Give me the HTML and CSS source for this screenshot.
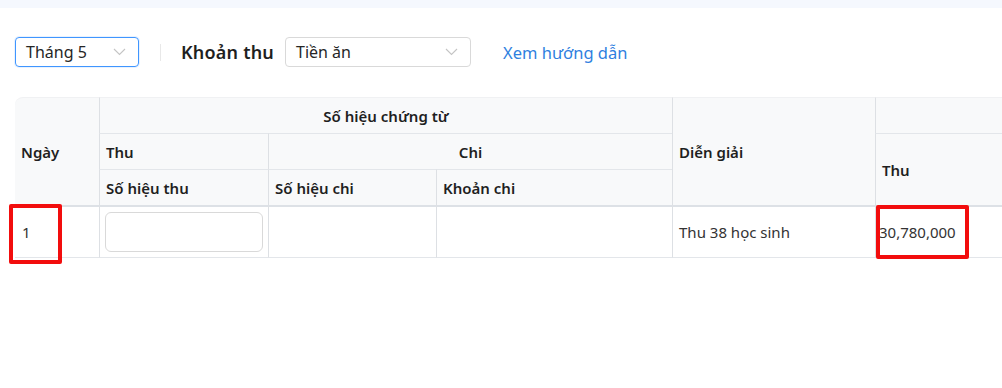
FILE: index.html
```html
<!DOCTYPE html>
<html lang="vi">
<head>
    <meta charset="UTF-8">
    <meta name="viewport" content="width=device-width, initial-scale=1.0">
    <title>Sổ thu chi</title>
    <link rel="stylesheet" href="styles.css">
</head>
<body>
    <div class="top-strip"></div>

    <div class="toolbar">
        <div class="select select-focus select-month">
            <span>Tháng 5</span>
            <svg class="chevron" width="13" height="8" viewBox="0 0 13 8"><path d="M1 1 L6.5 6.5 L12 1" fill="none" stroke="#c4c4c4" stroke-width="1.1"/></svg>
        </div>
        <div class="divider"></div>
        <div class="label">Khoản thu</div>
        <div class="select select-fee">
            <span>Tiền ăn</span>
            <svg class="chevron" width="13" height="8" viewBox="0 0 13 8"><path d="M1 1 L6.5 6.5 L12 1" fill="none" stroke="#c4c4c4" stroke-width="1.1"/></svg>
        </div>
        <a class="guide-link" href="#">Xem hướng dẫn</a>
    </div>

    <div class="sheet">
        <div class="table-wrap">
            <table class="ledger">
                <colgroup>
                    <col style="width: 84px">
                    <col style="width: 169px">
                    <col style="width: 168px">
                    <col style="width: 236px">
                    <col style="width: 203px">
                    <col style="width: 300px">
                </colgroup>
                <thead>
                    <tr>
                        <th rowspan="3" class="first">Ngày</th>
                        <th colspan="3" class="center">Số hiệu chứng từ</th>
                        <th rowspan="3">Diễn giải</th>
                        <th></th>
                    </tr>
                    <tr>
                        <th>Thu</th>
                        <th colspan="2" class="center">Chi</th>
                        <th rowspan="2">Thu</th>
                    </tr>
                    <tr>
                        <th>Số hiệu thu</th>
                        <th>Số hiệu chi</th>
                        <th>Khoản chi</th>
                    </tr>
                </thead>
                <tbody>
                    <tr>
                        <td class="first">1</td>
                        <td class="input-cell"><input type="text" class="cell-input"></td>
                        <td></td>
                        <td></td>
                        <td>Thu 38 học sinh</td>
                        <td class="amount">30,780,000</td>
                    </tr>
                </tbody>
            </table>
        </div>
        <div class="mark mark-day"></div>
        <div class="mark mark-amount"></div>
    </div>
</body>
</html>
```

FILE: styles.css
```css
body {
    margin: 0;
    font-family: "Noto Sans", "Open Sans", sans-serif;
    font-size: 15px;
    color: #262626;
    background: #fff;
}
.top-strip {
    height: 8px;
    background: #f5f8fe;
}
.toolbar {
    display: flex;
    align-items: center;
    padding: 29px 0 0 15px;
    height: 30px;
}
.select {
    box-sizing: border-box;
    height: 30px;
    border: 1px solid #d9d9d9;
    border-radius: 4px;
    display: flex;
    align-items: center;
    justify-content: space-between;
    padding: 0 12px 0 10px;
    font-size: 16px;
    color: #262626;
}
.select-focus {
    border-color: #4096ff;
    box-shadow: 0 0 0 1px rgba(64, 150, 255, 0.12);
}
.select-month {
    width: 124px;
}
.select-fee {
    width: 186px;
}
.divider {
    width: 1px;
    height: 17px;
    background: #e8e8e8;
    margin: 0 20px 0 21px;
}
.label {
    font-size: 18px;
    font-weight: 600;
    color: #1f1f1f;
    margin-right: 11px;
    letter-spacing: 0.2px;
}
.guide-link {
    margin-left: 32px;
    font-size: 16.5px;
    color: #2f7fe0;
    text-decoration: none;
}
.sheet {
    position: relative;
    margin-top: 30px;
    padding-bottom: 20px;
}
.table-wrap {
    margin-left: 15px;
    overflow: hidden;
}
.ledger {
    table-layout: fixed;
    width: 1160px;
    border-collapse: separate;
    border-spacing: 0;
}
.ledger th {
    background: #f8f9fa;
    font-weight: 600;
    color: #1f1f1f;
    text-align: left;
    padding: 6px 6px;
    height: 23px;
    border-top: 1px solid #e3e6ea;
    border-left: 1px solid #dde0e4;
    white-space: nowrap;
}
.ledger thead tr:first-child th {
    border-top: 1px solid #f0f1f3;
}
.ledger th.first {
    border-left: none;
    border-top-left-radius: 8px;
}
.ledger th.center {
    text-align: center;
}
.ledger tbody td {
    border-top: 2px solid #dde1e6;
    border-bottom: 1px solid #e3e6ea;
    border-left: 1px solid #dde0e4;
    padding: 0 6px;
    height: 50px;
    color: #333;
}
.ledger tbody td.first {
    border-left: none;
    padding-left: 7px;
}
.ledger td.input-cell {
    padding: 0 5px;
}
.cell-input {
    box-sizing: border-box;
    width: 158px;
    height: 40px;
    border: 1px solid #d9d9d9;
    border-radius: 6px;
    display: block;
}
.ledger td.amount {
    padding-left: 3px;
}
.mark {
    position: absolute;
    z-index: 2;
    border: 4px solid #f20d0d;
    border-radius: 2px;
    box-sizing: border-box;
}
.mark-day {
    left: 9px;
    top: 107px;
    width: 53px;
    height: 60px;
}
.mark-amount {
    left: 876px;
    top: 108px;
    width: 93px;
    height: 54px;
}
```
